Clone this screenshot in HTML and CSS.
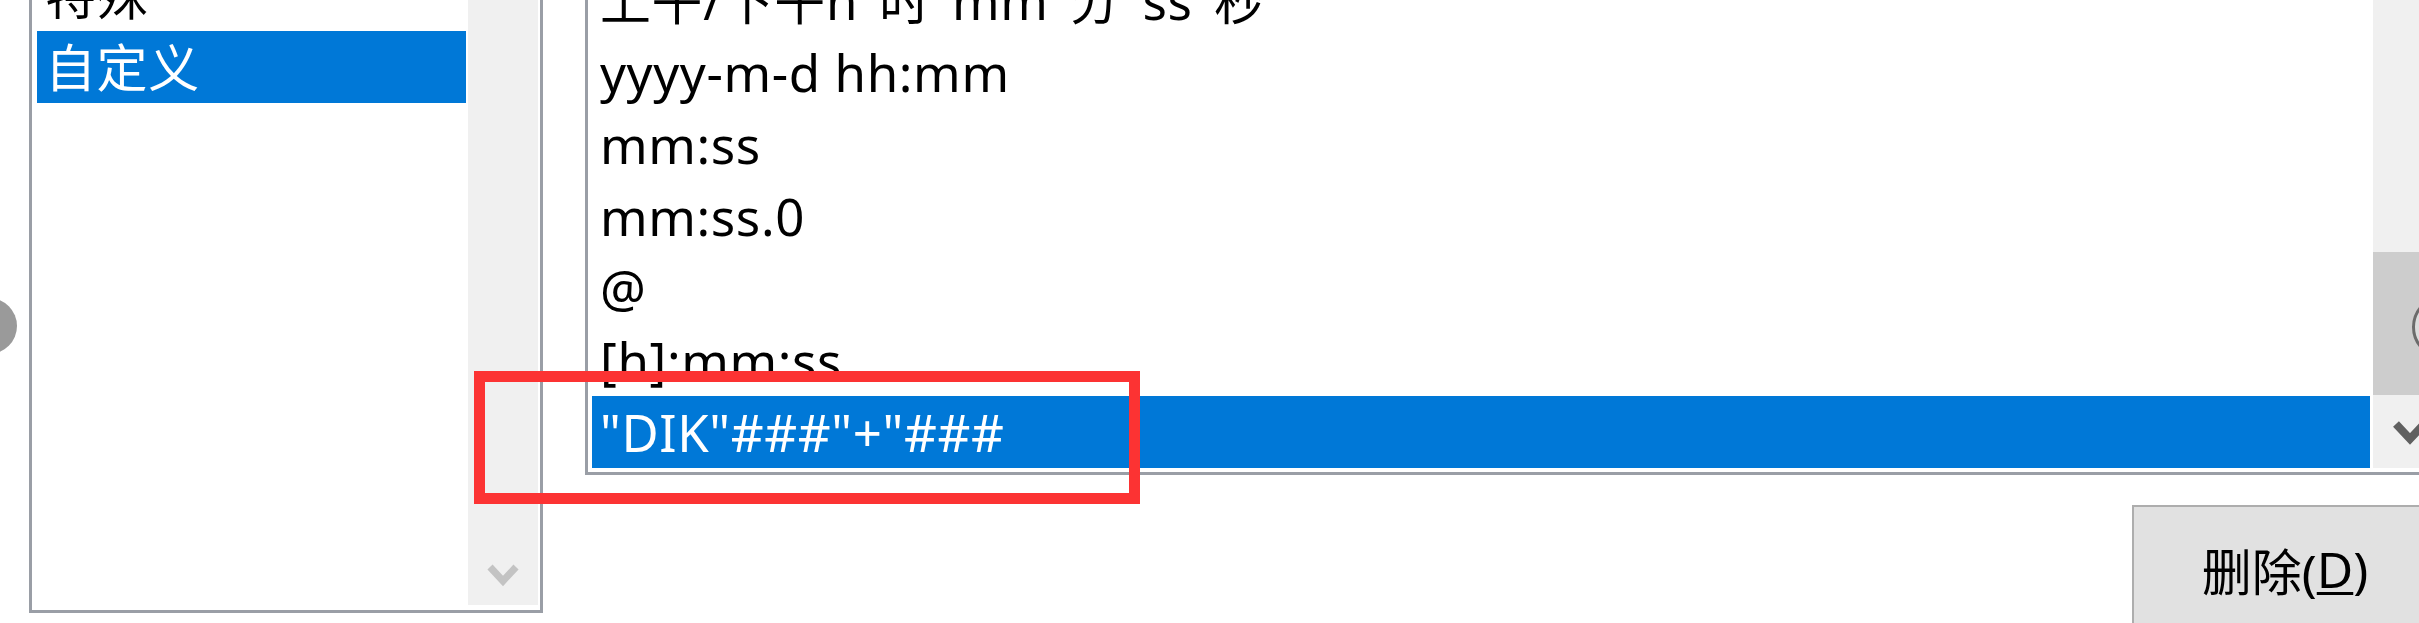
FILE: index.html
```html
<!DOCTYPE html>
<html lang="zh-CN">
<head>
<meta charset="utf-8">
<title>自定义格式</title>
<link rel="stylesheet" href="styles.css">
</head>
<body>
<div class="page">
  <div class="listbox left-list">
    <div class="items left-items">
      <div class="row">特殊</div>
      <div class="row sel">自定义</div>
    </div>
    <div class="vscroll left-scroll">
      <div class="track"></div>
      <div class="arrow left-arrow">
        <svg width="32" height="24" viewBox="0 0 32 24"><polyline points="3,4 16,18 29,4" fill="none" stroke="#c3c3c3" stroke-width="7"/></svg>
      </div>
    </div>
  </div>

  <div class="right-col">
    <div class="listbox right-list">
      <div class="items right-items">
        <div class="row">上午/下午h"时"mm"分"ss"秒"</div>
        <div class="row">yyyy-m-d hh:mm</div>
        <div class="row">mm:ss</div>
        <div class="row">mm:ss.0</div>
        <div class="row">@</div>
        <div class="row">[h]:mm:ss</div>
        <div class="row sel">"DIK"###"+"###</div>
      </div>
      <div class="vscroll right-scroll">
        <div class="track"></div>
        <div class="thumb"></div>
        <div class="arrow right-arrow">
          <svg width="34" height="26" viewBox="0 0 34 26"><polyline points="3,5 17,20 31,5" fill="none" stroke="#606060" stroke-width="8"/></svg>
        </div>
      </div>
    </div>
    <div class="btn-row">
      <div class="btn">删除(<u>D</u>)</div>
    </div>
  </div>

  <div class="annot-box"></div>
  <div class="cursor-dot dot-left"></div>
  <div class="cursor-dot dot-right"></div>
</div>
</body>
</html>
```

FILE: styles.css
```css
html, body {
  margin: 0;
  padding: 0;
  background: #ffffff;
}

body {
  font-family: "Noto Sans", "Noto Sans CJK SC", sans-serif;
  color: #000000;
}

.page {
  position: relative;
  width: 2419px;
  height: 623px;
  overflow: hidden;
  display: flex;
  align-items: flex-start;
  background: #ffffff;
}

/* list boxes */
.listbox {
  box-sizing: border-box;
  border: 3px solid #9a9ea6;
  background: #ffffff;
  display: flex;
  flex-shrink: 0;
}

.left-list {
  margin-left: 29px;
  margin-top: -44px;
  width: 514px;
  height: 657px;
  padding: 0 2px 5px 5px;
}

.left-items {
  width: 429px;
  flex-shrink: 0;
}

.left-scroll {
  margin-left: 2px;
  width: 70px;
}

.right-col {
  display: flex;
  flex-direction: column;
  margin-left: 42px;
  margin-top: -39px;
  flex-shrink: 0;
}

.right-list {
  width: 1864px;
  height: 514px;
  padding: 0 0 4px 4px;
}

.right-items {
  width: 1778px;
  flex-shrink: 0;
}

.right-scroll {
  margin-left: 3px;
  width: 73px;
}

/* rows */
.row {
  height: 72px;
  line-height: 72px;
  padding-left: 8px;
  font-size: 51px;
  letter-spacing: 0.6px;
  white-space: nowrap;
  overflow: hidden;
  color: #000000;
}

.row.sel {
  background: #0078d7;
  color: #ffffff;
}

/* scrollbars */
.vscroll {
  display: flex;
  flex-direction: column;
  background: #f0f0f0;
  flex-shrink: 0;
}

.track {
  flex: 1;
}

.thumb {
  height: 143px;
  background: #cdcdcd;
}

.arrow {
  display: flex;
  align-items: center;
  justify-content: center;
}

.left-arrow {
  height: 60px;
}

.right-arrow {
  height: 73px;
}

.arrow svg {
  display: block;
}

/* button */
.btn-row {
  display: flex;
  justify-content: flex-end;
  margin-top: 30px;
  padding-right: 11px;
}

.btn {
  box-sizing: border-box;
  width: 306px;
  height: 128px;
  border: 2px solid #adadad;
  background: #e1e1e1;
  font-size: 50px;
  color: #000000;
  display: flex;
  align-items: center;
  justify-content: center;
  white-space: nowrap;
}

.btn u {
  text-decoration-thickness: 3px;
  text-underline-offset: 4px;
}

/* overlays: annotation rectangle and cursor markers */
.annot-box {
  position: absolute;
  left: 474px;
  top: 371px;
  width: 666px;
  height: 133px;
  box-sizing: border-box;
  border: 11px solid #fc3333;
}

.cursor-dot {
  position: absolute;
  border-radius: 50%;
  box-sizing: border-box;
}

.dot-left {
  left: -39px;
  top: 298px;
  width: 56px;
  height: 56px;
  background: #9a9a9a;
}

.dot-right {
  left: 2412px;
  top: 295px;
  width: 64px;
  height: 64px;
  border: 3px solid #6b6b6b;
  background: #dcdcdc;
}
```
